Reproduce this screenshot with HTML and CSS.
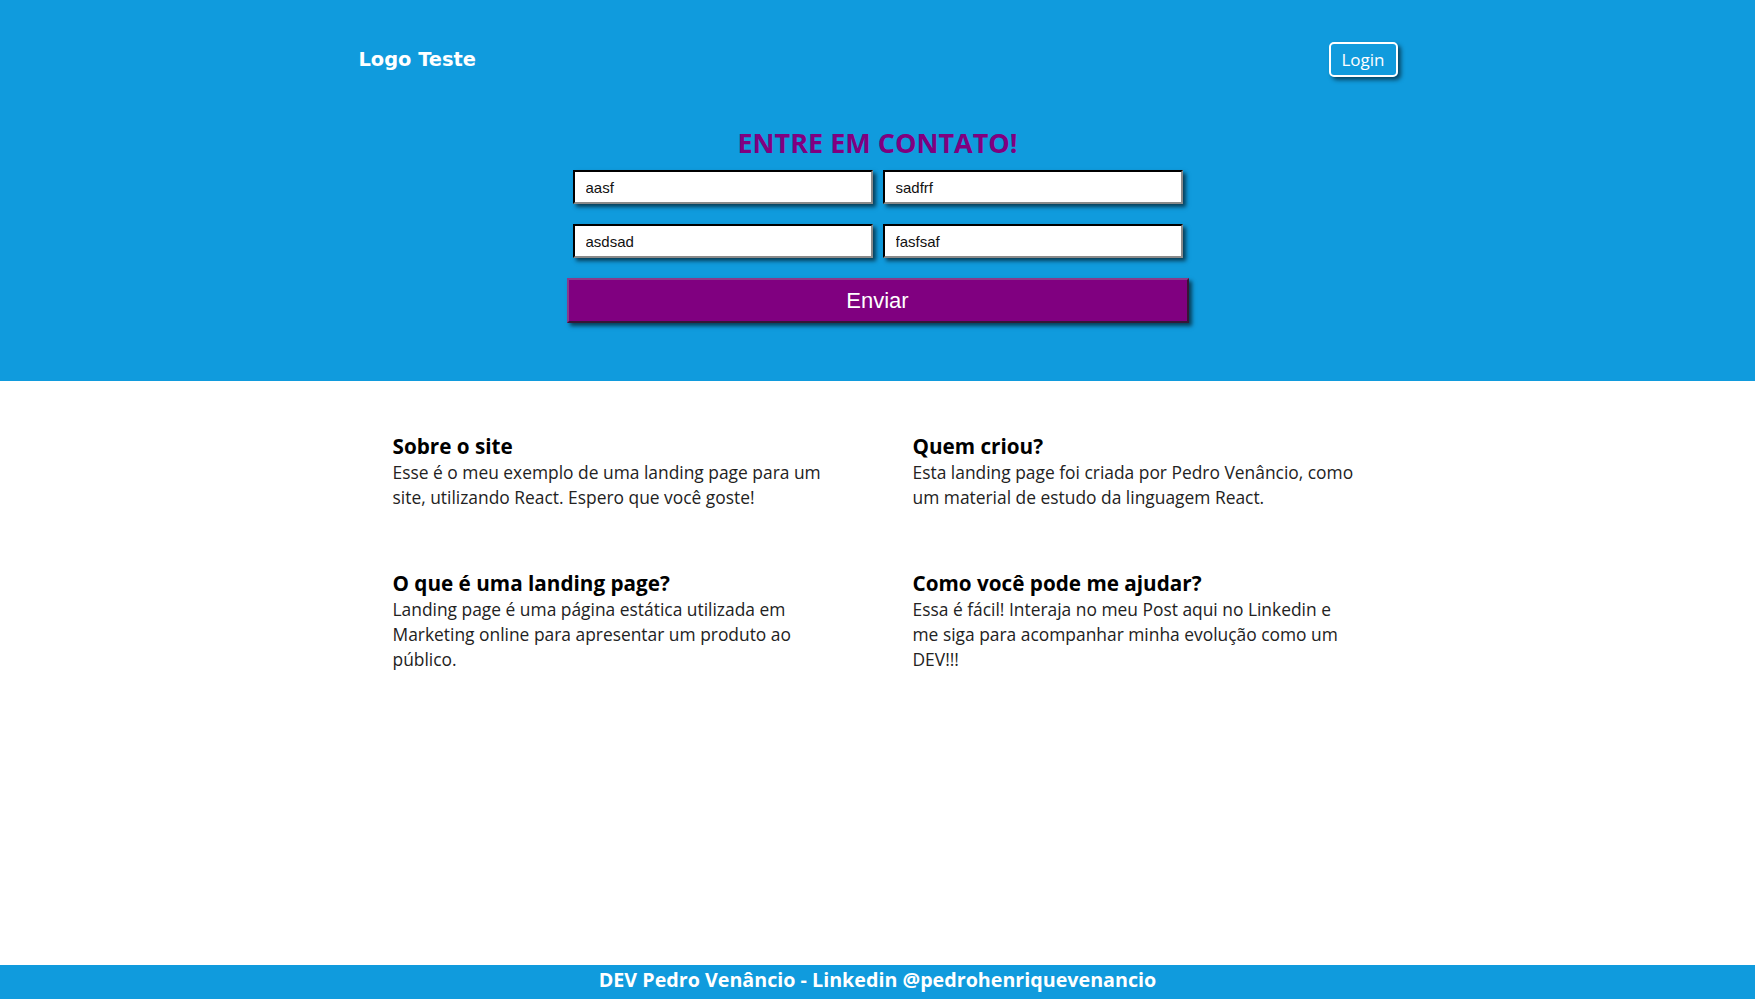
FILE: index.html
```html
<!DOCTYPE html>
<html lang="pt-BR">
<head>
<meta charset="utf-8">
<title>Landing Page</title>
<link rel="stylesheet" href="styles.css">
</head>
<body>
<div class="page">
  <header class="hero">
    <nav class="nav">
      <span class="logo">Logo Teste</span>
      <button class="login" type="button">Login</button>
    </nav>
    <h1 class="title">ENTRE EM CONTATO!</h1>
    <form class="contact">
      <div class="fields">
        <input class="field" type="text" value="aasf">
        <input class="field" type="text" value="sadfrf">
        <input class="field" type="text" value="asdsad">
        <input class="field" type="text" value="fasfsaf">
      </div>
      <button class="send" type="button">Enviar</button>
    </form>
  </header>
  <main class="info">
    <section class="item">
      <h3 class="item-title">Sobre o site</h3>
      <p class="item-text">Esse é o meu exemplo de uma landing page para um site, utilizando React. Espero que você goste!</p>
    </section>
    <section class="item">
      <h3 class="item-title">Quem criou?</h3>
      <p class="item-text">Esta landing page foi criada por Pedro Venâncio, como um material de estudo da linguagem React.</p>
    </section>
    <section class="item">
      <h3 class="item-title">O que é uma landing page?</h3>
      <p class="item-text">Landing page é uma página estática utilizada em Marketing online para apresentar um produto ao público.</p>
    </section>
    <section class="item">
      <h3 class="item-title">Como você pode me ajudar?</h3>
      <p class="item-text">Essa é fácil! Interaja no meu Post aqui no Linkedin e me siga para acompanhar minha evolução como um DEV!!!</p>
    </section>
  </main>
  <footer class="footer">DEV Pedro Venâncio - Linkedin @pedrohenriquevenancio</footer>
</div>
</body>
</html>
```
FILE: styles.css
```css
* { box-sizing: border-box; }
html, body { margin: 0; padding: 0; }
body {
  font-family: "Open Sans", "Noto Sans", sans-serif;
  background: #ffffff;
}
.page {
  min-height: 100vh;
  display: flex;
  flex-direction: column;
}
.hero {
  background: #109bdd;
  height: 381px;
  padding-top: 42px;
}
.nav {
  width: 1040px;
  margin: 0 auto;
  height: 35px;
  display: flex;
  align-items: center;
  justify-content: space-between;
}
.logo {
  font-family: "DejaVu Sans", Verdana, sans-serif;
  font-weight: bold;
  font-size: 19.4px;
  color: #ffffff;
  padding-left: 1px;
}
.login {
  width: 69px;
  height: 35px;
  border: 2px solid #ffffff;
  border-radius: 5px;
  background: transparent;
  color: #ffffff;
  font-family: "Open Sans", sans-serif;
  font-size: 17px;
  padding: 0;
  box-shadow: 3px 3px 4px rgba(0, 0, 0, 0.55);
}
.title {
  margin: 47px 0 0;
  text-align: center;
  color: #800080;
  font-size: 27px;
  line-height: 38px;
  font-weight: 700;
}
.contact {
  width: 622px;
  margin: 8px auto 0;
  display: flex;
  flex-direction: column;
  align-items: center;
}
.fields {
  display: grid;
  grid-template-columns: 300px 300px;
  column-gap: 10px;
  row-gap: 20px;
}
.field {
  height: 34px;
  width: 300px;
  border: 2px inset #767676;
  border-top-color: #1d2b33;
  border-left-color: #1d2b33;
  border-right-color: #8a8a8a;
  border-bottom-color: #8a8a8a;
  padding: 0 11px;
  font-family: "Liberation Sans", Arial, sans-serif;
  font-size: 15px;
  color: #111;
  background: #fff;
  box-shadow: 3px 3px 4px rgba(0, 0, 0, 0.6);
}
.send {
  margin-top: 20px;
  width: 622px;
  height: 45px;
  background: #800080;
  color: #ffffff;
  border: 2px outset #8a3b8a;
  font-family: "Liberation Sans", Arial, sans-serif;
  font-size: 22px;
  box-shadow: 3px 3px 4px rgba(0, 0, 0, 0.6);
}
.info {
  flex: 1;
  width: 1040px;
  margin: 0 auto;
  padding-top: 51px;
  display: grid;
  grid-template-columns: 520px 520px;
  row-gap: 59px;
  align-content: start;
}
.item {
  padding: 0 40px 0 35px;
}
.item-title {
  margin: 0;
  font-size: 20.7px;
  line-height: 28px;
  font-weight: 700;
  color: #000;
}
.item-text {
  margin: 0;
  font-size: 17.4px;
  line-height: 25px;
  color: #222;
}
.footer {
  height: 34px;
  background: #109bdd;
  color: #ffffff;
  font-weight: 700;
  font-size: 19.7px;
  line-height: 30px;
  text-align: center;
}
```
